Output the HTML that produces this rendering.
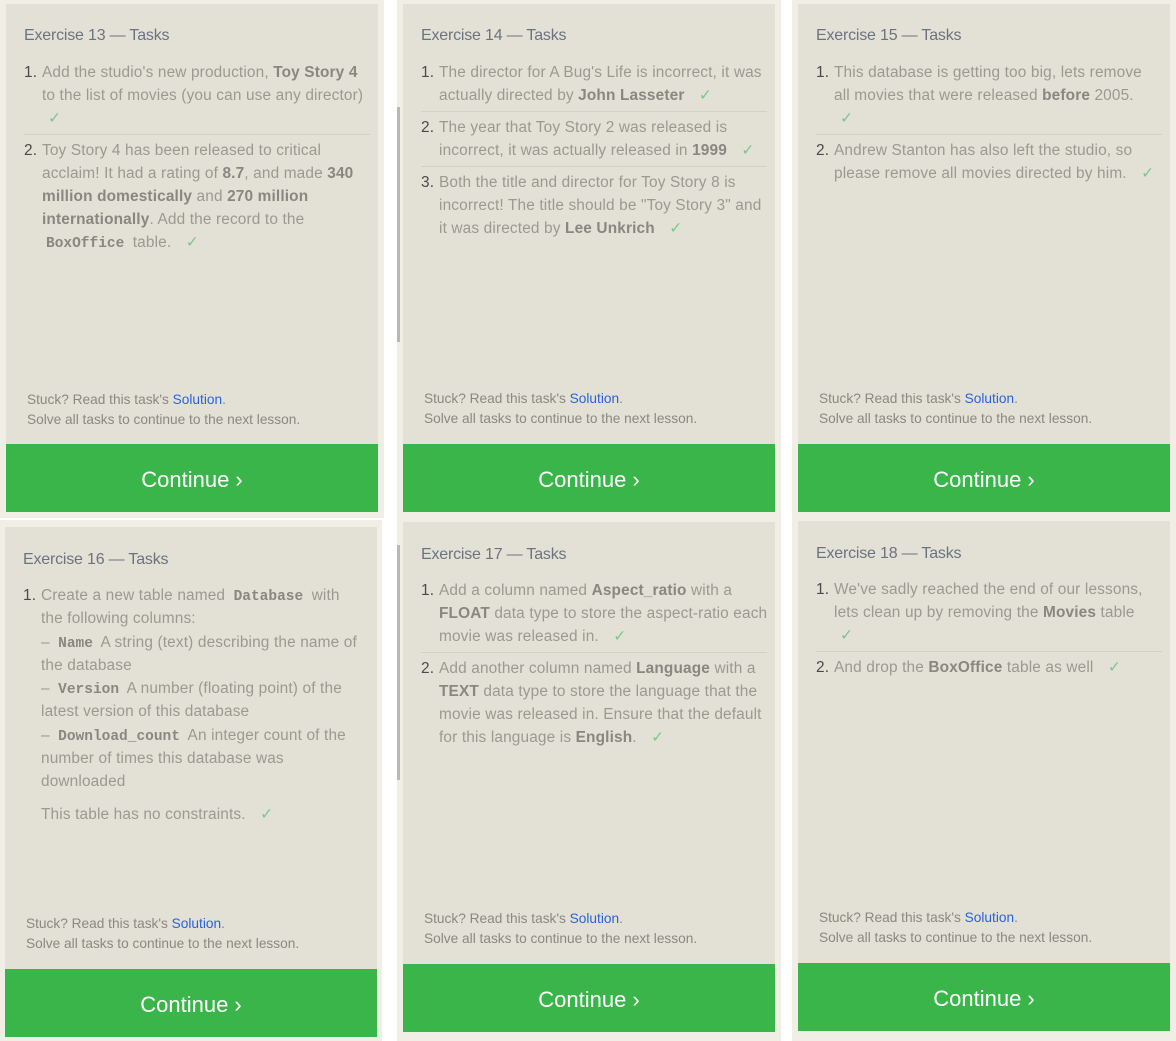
<!DOCTYPE html>
<html><head><meta charset="utf-8"><style>
*{margin:0;padding:0;box-sizing:border-box}
body{width:1176px;height:1041px;background:#fff;position:relative;overflow:hidden;font-family:"Liberation Sans",sans-serif}
.fr{position:absolute;background:#f1eee6}
.p{position:absolute;background:#e3e1d6;width:372px}
.t{position:absolute;left:18px;font-size:16px;color:#6b7380;letter-spacing:-0.2px}
ol{position:absolute;left:18px;right:8px;list-style:none;font-size:15.4px;letter-spacing:0.15px;line-height:23px;color:#9b9990}
li{position:relative;padding-left:18px;padding-bottom:4px;white-space:nowrap}
li+li{border-top:1px solid #d3d1c7;padding-top:4px}
li .n{position:absolute;left:0;color:#4a4a4a}
b{color:#888780}
code{font-family:"Liberation Mono",monospace;font-weight:bold;color:#888780;font-size:14.5px;padding:0 4px;letter-spacing:0;line-height:0}
.c{color:#7cc98a;margin-left:10px}
.f{position:absolute;left:21px;font-size:13.7px;line-height:20px;color:#8a8880}
.f a{color:#2962d9;text-decoration:none}
.btn{position:absolute;left:0;width:372px;height:68px;background:#39b54a;color:#fff;font-size:22px;text-align:center;line-height:72px}
.sb{position:absolute;width:3px;background:#b9b8b4}
</style></head><body>
<div class="fr" style="left:0;top:0;width:384px;height:518px"></div>
<div class="fr" style="left:397px;top:0;width:384px;height:518px"></div>
<div class="fr" style="left:792px;top:0;width:384px;height:518px"></div>
<div class="fr" style="left:0;top:520px;width:382px;height:521px"></div>
<div class="fr" style="left:397px;top:516px;width:384px;height:525px"></div>
<div class="fr" style="left:792px;top:514px;width:384px;height:527px"></div>
<div class="sb" style="left:397px;top:107px;height:235px"></div>
<div class="sb" style="left:397px;top:545px;height:235px"></div>

<div class="p" style="left:6px;top:4px;height:508px">
<div class="t" style="top:23px">Exercise 13 — Tasks</div>
<ol style="top:57px"><li><span class="n">1.</span>Add the studio's new production, <b>Toy Story 4</b><br>to the list of movies (you can use any director)<br><span class="c" style="margin-left:6px">✓</span></li><li><span class="n">2.</span>Toy Story 4 has been released to critical<br>acclaim! It had a rating of <b>8.7</b>, and made <b>340</b><br><b>million domestically</b> and <b>270 million</b><br><b>internationally</b>. Add the record to the<br><code>BoxOffice</code> table. <span class="c">✓</span></li></ol>
<div class="f" style="top:386px">Stuck? Read this task's <a>Solution</a>.<br>Solve all tasks to continue to the next lesson.</div>
<div class="btn" style="top:440px">Continue ›</div></div>

<div class="p" style="left:403px;top:4px;height:508px">
<div class="t" style="top:23px">Exercise 14 — Tasks</div>
<ol style="top:57px"><li><span class="n">1.</span>The director for A Bug's Life is incorrect, it was<br>actually directed by <b>John Lasseter</b> <span class="c">✓</span></li><li><span class="n">2.</span>The year that Toy Story 2 was released is<br>incorrect, it was actually released in <b>1999</b> <span class="c">✓</span></li><li><span class="n">3.</span>Both the title and director for Toy Story 8 is<br>incorrect! The title should be "Toy Story 3" and<br>it was directed by <b>Lee Unkrich</b> <span class="c">✓</span></li></ol>
<div class="f" style="top:385px">Stuck? Read this task's <a>Solution</a>.<br>Solve all tasks to continue to the next lesson.</div>
<div class="btn" style="top:440px">Continue ›</div></div>

<div class="p" style="left:798px;top:4px;height:508px">
<div class="t" style="top:23px">Exercise 15 — Tasks</div>
<ol style="top:57px"><li><span class="n">1.</span>This database is getting too big, lets remove<br>all movies that were released <b>before</b> 2005.<br><span class="c" style="margin-left:6px">✓</span></li><li><span class="n">2.</span>Andrew Stanton has also left the studio, so<br>please remove all movies directed by him. <span class="c">✓</span></li></ol>
<div class="f" style="top:385px">Stuck? Read this task's <a>Solution</a>.<br>Solve all tasks to continue to the next lesson.</div>
<div class="btn" style="top:440px">Continue ›</div></div>

<div class="p" style="left:5px;top:527px;height:509px">
<div class="t" style="top:24px">Exercise 16 — Tasks</div>
<ol style="top:57px;line-height:23.3px"><li><span class="n">1.</span>Create a new table named <code>Database</code> with<br>the following columns:<br>– <code>Name</code> A string (text) describing the name of<br>the database<br>– <code>Version</code> A number (floating point) of the<br>latest version of this database<br>– <code>Download_count</code> An integer count of the<br>number of times this database was<br>downloaded<div style="height:9px"></div>This table has no constraints. <span class="c">✓</span></li></ol>
<div class="f" style="top:387px">Stuck? Read this task's <a>Solution</a>.<br>Solve all tasks to continue to the next lesson.</div>
<div class="btn" style="top:442px">Continue ›</div></div>

<div class="p" style="left:403px;top:522px;height:509px">
<div class="t" style="top:24px">Exercise 17 — Tasks</div>
<ol style="top:57px"><li><span class="n">1.</span>Add a column named <b>Aspect_ratio</b> with a<br><b>FLOAT</b> data type to store the aspect-ratio each<br>movie was released in. <span class="c">✓</span></li><li><span class="n">2.</span>Add another column named <b>Language</b> with a<br><b>TEXT</b> data type to store the language that the<br>movie was released in. Ensure that the default<br>for this language is <b>English</b>. <span class="c">✓</span></li></ol>
<div class="f" style="top:387px">Stuck? Read this task's <a>Solution</a>.<br>Solve all tasks to continue to the next lesson.</div>
<div class="btn" style="top:442px">Continue ›</div></div>

<div class="p" style="left:798px;top:521px;height:509px">
<div class="t" style="top:24px">Exercise 18 — Tasks</div>
<ol style="top:57px"><li><span class="n">1.</span>We've sadly reached the end of our lessons,<br>lets clean up by removing the <b>Movies</b> table<br><span class="c" style="margin-left:6px">✓</span></li><li><span class="n">2.</span>And drop the <b>BoxOffice</b> table as well <span class="c">✓</span></li></ol>
<div class="f" style="top:387px">Stuck? Read this task's <a>Solution</a>.<br>Solve all tasks to continue to the next lesson.</div>
<div class="btn" style="top:442px">Continue ›</div></div>
</body></html>
